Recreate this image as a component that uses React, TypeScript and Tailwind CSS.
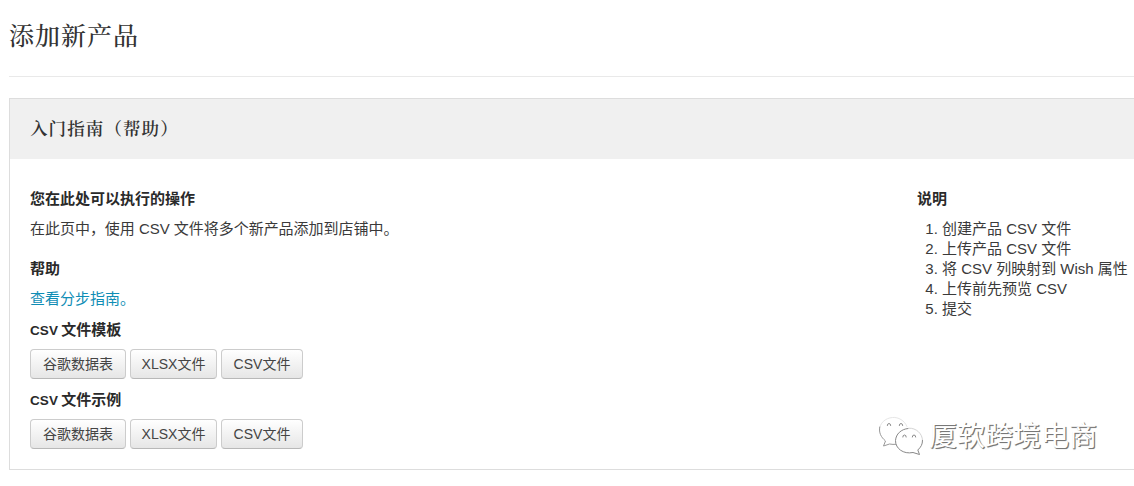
import React from 'react';

interface FileButtonsProps {
  title: string;
}

const buttonLabels = [
  { label: '谷歌数据表', width: 'w-24' },
  { label: 'XLSX文件', width: 'w-[87px]' },
  { label: 'CSV文件', width: 'w-[82px]' },
];

const steps = [
  '创建产品 CSV 文件',
  '上传产品 CSV 文件',
  '将 CSV 列映射到 Wish 属性',
  '上传前先预览 CSV',
  '提交',
];

const FileButtons: React.FC<FileButtonsProps> = ({ title }) => (
  <section>
    <h3 className="h-5 text-[15px] font-bold leading-5 text-[#2a2a2a]">
      <span className="mr-[-1px] text-[13.5px] tracking-[0.1px]">CSV</span> {title}
    </h3>
    <div className="mt-[9px] flex gap-1">
      {buttonLabels.map(({ label, width }) => (
        <button
          key={label}
          className={`${width} h-[30px] whitespace-nowrap rounded border border-[#ccc] border-b-[#b8b8b8] bg-linear-to-b from-white to-[#e6e6e6] text-[14px] leading-5 text-[#444]`}
        >
          {label}
        </button>
      ))}
    </div>
  </section>
);

const Watermark: React.FC = () => (
  <div className="absolute left-[878px] top-[415px] flex items-center">
    <svg
      className="relative -top-px"
      width="46"
      height="42"
      viewBox="0 0 46 42"
      fill="none"
      strokeLinecap="round"
      strokeLinejoin="round"
    >
      <path d="M29 11.5C26.5 5.5 20.5 2 14.5 2.5C7.5 3 1.5 8 1.5 15" stroke="#e6e6e6" strokeWidth="1" />
      <path d="M1.7 12C.7 18 3 22 7.5 26L5.5 31L11.5 29C14 29.4 16 29.6 18 29.3" stroke="#999" strokeWidth="1" />
      <ellipse cx="31" cy="25.5" rx="13.5" ry="12.5" fill="#fff" />
      <path d="M31 13.2C38 12.8 44.5 18.5 44.5 25.5" stroke="#d4d4d4" strokeWidth="1" />
      <path
        d="M30 13.5C23 14.2 18 19 17.5 25.5C17.3 33.5 25.5 39.5 35 37.5L41.5 39.5L39.8 35C43 32 44.5 29.5 44.5 25.5"
        stroke="#888"
        strokeWidth="1"
      />
      <path
        d="M9.3 10.5Q9.3 8.5 11 8.5T12.7 10.5M21.3 10.5Q21.3 8.5 23 8.5T24.7 10.5M24.8 22Q24.8 20 26.5 20T28.2 22M34.3 22Q34.3 20 36 20T37.7 22"
        stroke="#888"
        strokeWidth="1"
      />
    </svg>
    <span className="ml-[5px] whitespace-nowrap pt-px text-[28px] leading-[42px] text-white [text-shadow:1px_1px_0_#777,1px_1px_1px_#888]">
      厦软跨境电商
    </span>
  </div>
);

const App: React.FC = () => {
  return (
    <div className="relative h-[486px] w-full overflow-hidden bg-white pl-[9px] font-['Liberation_Sans','Noto_Sans_CJK_SC',sans-serif] text-[15px] leading-5 text-[#3a3a3a]">
      <header className="h-[77px] border-b border-[#e9e9e9] pt-[19px]">
        <h1 className="font-['Liberation_Serif','Noto_Serif_CJK_SC','Noto_Sans_CJK_SC',serif] text-[25px] font-medium leading-9 tracking-[1px] text-[#333]">
          添加新产品
        </h1>
      </header>

      <main className="mt-[21px] h-[372px] border border-r-0 border-[#ddd]">
        <div className="h-[60px] bg-[#f0f0f0] px-5">
          <h2 className="font-['Liberation_Serif','Noto_Serif_CJK_SC','Noto_Sans_CJK_SC',serif] text-[17.5px] font-semibold leading-[61px] tracking-[1.1px] text-[#333]">
            入门指南（帮助）
          </h2>
        </div>

        <div className="flex pl-5 pt-[30px]">
          <div className="w-[887px] shrink-0">
            <h3 className="font-bold text-[#2a2a2a]">您在此处可以执行的操作</h3>
            <p className="mt-2.5 tracking-[-0.03px]">在此页中，使用 CSV 文件将多个新产品添加到店铺中。</p>
            <h3 className="mt-5 font-bold text-[#2a2a2a]">帮助</h3>
            <p className="mb-[11px] mt-2.5">
              <a href="#" className="text-[#0f8db5]">查看分步指南。</a>
            </p>
            <div className="flex flex-col gap-[11px]">
              <FileButtons title="文件模板" />
              <FileButtons title="文件示例" />
            </div>
          </div>

          <aside className="shrink-0">
            <h3 className="font-bold text-[#2a2a2a]">说明</h3>
            <ol className="mt-2.5 list-decimal whitespace-nowrap pl-[25px]">
              {steps.map((step) => (
                <li key={step}>{step}</li>
              ))}
            </ol>
          </aside>
        </div>
      </main>

      <Watermark />
    </div>
  );
};

export default App;
